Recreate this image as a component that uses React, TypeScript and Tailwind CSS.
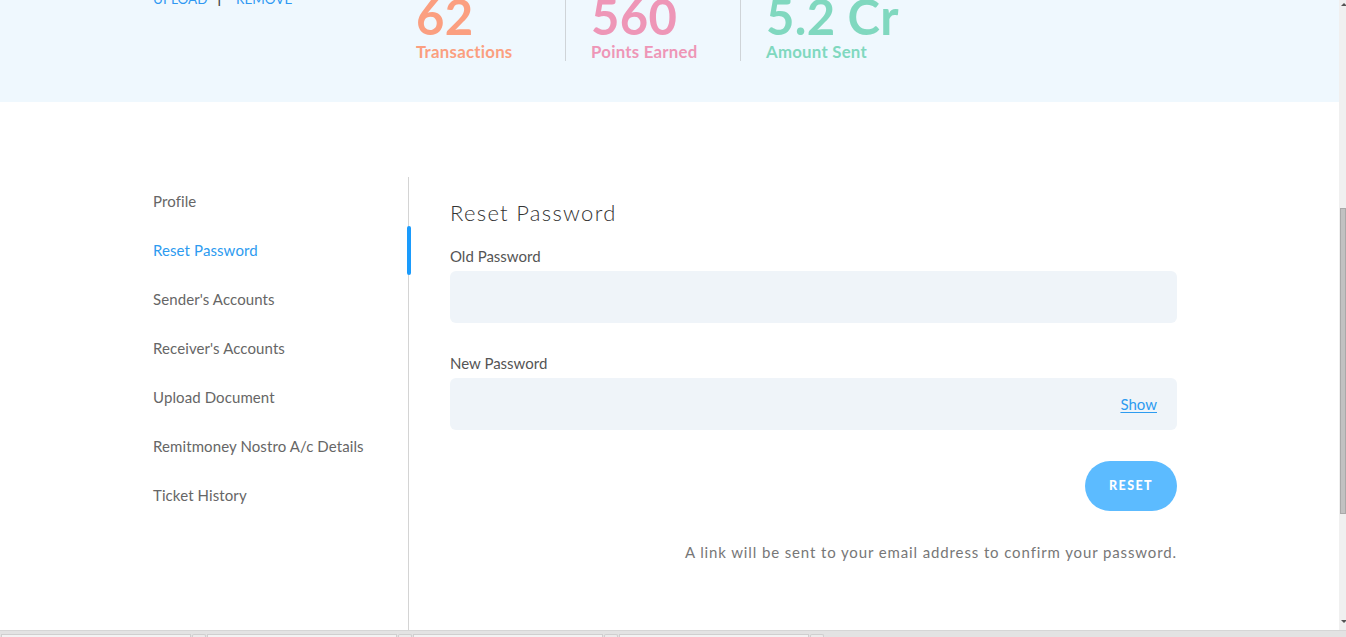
import React from "react";

const font = { fontFamily: "Lato, 'Open Sans', sans-serif" };

function Stat({ value, label, color, first, last }: { value: string; label: string; color: string; first?: boolean; last?: boolean }) {
  return (
    <div className={`${first ? "w-[150px]" : "w-[175px] pl-[25px]"} ${last ? "" : "border-r border-[#cfd4d8]"} h-[61px] flex flex-col`}>
      <div className={`text-[49px] font-bold leading-[44px] mt-[-6px] tracking-[0.3px] ${color}`}>{value}</div>
      <div className={`text-[16.8px] font-bold leading-[18px] mt-[5px] tracking-[0.25px] ${color}`}>{label}</div>
    </div>
  );
}

const navItems = [
  "Profile",
  "Reset Password",
  "Sender's Accounts",
  "Receiver's Accounts",
  "Upload Document",
  "Remitmoney Nostro A/c Details",
  "Ticket History",
];

export default function App() {
  return (
    <div className="w-[1346px] h-[637px] overflow-hidden bg-white flex flex-col" style={font}>
      <div className="flex h-[630px]">
        <div className="flex-1 flex flex-col overflow-hidden">
          {/* header */}
          <div className="h-[102px] bg-[#eff8fe] flex shrink-0 overflow-hidden">
            <div className="w-[263px] pl-[153px] shrink-0">
              <div className="mt-[-8px] text-[13.5px] leading-[14px] text-[#2f98f2] flex gap-[10px]">
                <span>UPLOAD</span>
                <span className="text-[#444] font-bold">|</span>
                <span className="ml-[5px]">REMOVE</span>
              </div>
            </div>
            <div className="ml-[153px] flex">
              <Stat value="62" label="Transactions" color="text-[#fb9f80]" first />
              <Stat value="560" label="Points Earned" color="text-[#ee96b7]" />
              <Stat value="5.2 Cr" label="Amount Sent" color="text-[#80d8bf]" last />
            </div>
          </div>
          {/* main */}
          <div className="flex pt-[75px] flex-1">
            <div className="w-[409px] pl-[153px] shrink-0">
              <div className="border-r border-[#d4d4d4] h-full relative">
                {navItems.map((n, i) => (
                  <div
                    key={n}
                    className={`h-[49px] flex items-center text-[15px] tracking-[0.1px] ${i === 1 ? "text-[#2d9bf0]" : "text-[#666]"}`}
                  >
                    {n}
                  </div>
                ))}
                <div className="absolute right-[-3px] top-[49px] w-[4px] h-[49px] rounded-full bg-[#1a9bfc]" />
              </div>
            </div>
            <div className="pl-[41px] w-[768px] shrink-0">
              <div className="pt-[24px] text-[22px] leading-[24px] font-light tracking-[1.3px] text-[#333]">Reset Password</div>
              <div className="mt-[21px] text-[15px] leading-[20px] text-[#555]">Old Password</div>
              <div className="mt-[5px] h-[52px] rounded-[6px] bg-[#eff4f9]" />
              <div className="mt-[30px] text-[15px] leading-[20px] text-[#555]">New Password</div>
              <div className="mt-[5px] h-[52px] rounded-[6px] bg-[#eff4f9] flex items-center justify-end pr-[20px]">
                <span className="text-[15px] text-[#2d9bf0] underline underline-offset-2">Show</span>
              </div>
              <div className="mt-[31px] flex justify-end">
                <button className="w-[92px] h-[50px] rounded-full bg-[#5cbbff] text-white text-[12.5px] font-black tracking-[1.4px]">
                  RESET
                </button>
              </div>
              <div className="mt-[31px] text-right text-[15px] leading-[20px] tracking-[0.88px] text-[#777]">
                A link will be sent to your email address to confirm your password.
              </div>
            </div>
          </div>
        </div>
        {/* scrollbar */}
        <div className="w-[7px] bg-[#f0f0f0] relative shrink-0">
          <div className="absolute left-[2px] top-[3px] w-0 h-0 border-l-[3px] border-r-[3px] border-b-[3px] border-l-transparent border-r-transparent border-b-[#555]" />
          <div className="absolute left-[1px] right-0 top-[208px] h-[306px] bg-[#c1c1c1] border border-[#a9a9a9]" />
          <div className="absolute left-[2px] bottom-[7px] w-0 h-0 border-l-[3px] border-r-[3px] border-t-[3px] border-l-transparent border-r-transparent border-t-[#555]" />
        </div>
      </div>
      {/* bottom strip */}
      <div className="h-[7px] bg-[#e3e3e3] border-t border-[#d6d6d6] flex items-end">
        <div className="flex h-[3px]">
          {[0, 1, 2, 3].map((i) => (
            <div key={i} className="flex w-[205px] ml-[1px]">
              <div className="flex-1 bg-[#f3f3f3] border-t border-x border-[#cfcfcf]" />
              <div className="w-[14px] bg-[#ececec] border-t border-x border-[#cfcfcf] ml-[1px] rounded-t-[2px]" />
            </div>
          ))}
        </div>
      </div>
    </div>
  );
}
